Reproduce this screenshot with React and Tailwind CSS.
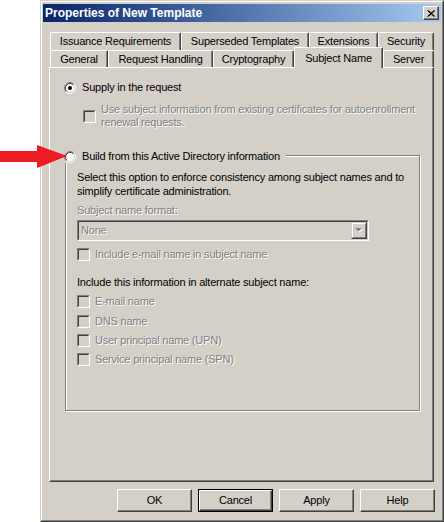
import React from "react";

function Radio({ checked }) {
  return (
    <svg width="12" height="12" viewBox="0 0 12 12" className="shrink-0 block">
      <circle cx="6" cy="6" r="4.5" fill="#ffffff" />
      <path d="M2.11 9.89 A5.5 5.5 0 0 1 9.89 2.11" fill="none" stroke="#808080" strokeWidth="1" />
      <path d="M9.89 2.11 A5.5 5.5 0 0 1 2.11 9.89" fill="none" stroke="#ffffff" strokeWidth="1" />
      <path d="M2.82 9.18 A4.5 4.5 0 0 1 9.18 2.82" fill="none" stroke="#404040" strokeWidth="1" />
      <path d="M9.18 2.82 A4.5 4.5 0 0 1 2.82 9.18" fill="none" stroke="#d4d0c8" strokeWidth="1" />
      {checked && <circle cx="6" cy="6" r="2" fill="#000000" />}
    </svg>
  );
}

function Check() {
  return (
    <div className="w-[13px] h-[13px] shrink-0 border border-t-[#808080] border-l-[#808080] border-b-white border-r-white">
      <div className="w-full h-full border border-t-[#404040] border-l-[#404040] border-b-[#d4d0c8] border-r-[#d4d0c8] bg-[#d4d0c8]" />
    </div>
  );
}

const dis = "text-[#808080] [text-shadow:1px_1px_0_#ffffff]";

function Tab({ w, children, selected }) {
  if (selected) {
    return (
      <div
        className={`${w} relative z-10 -mt-[3px] h-[21px] shrink-0 flex justify-center pt-[3px] leading-[14px] bg-[#d4d0c8] border-l border-t border-r border-l-white border-t-white border-r-[#404040] rounded-t-[2px] shadow-[inset_-1px_0_0_#808080]`}
      >
        {children}
      </div>
    );
  }
  return (
    <div
      className={`${w} h-full shrink-0 flex items-center justify-center leading-[13px] bg-[#d4d0c8] border-l border-t border-r border-l-white border-t-white border-r-[#404040] rounded-t-[2px] shadow-[inset_-1px_0_0_#808080]`}
    >
      {children}
    </div>
  );
}

function Button({ children, def }) {
  if (def) {
    return (
      <div className="w-[75px] h-[23px] border border-black">
        <div className="w-full h-full border border-t-white border-l-white border-b-[#404040] border-r-[#404040] shadow-[inset_-1px_-1px_0_#808080] flex items-center justify-center leading-[13px]">
          {children}
        </div>
      </div>
    );
  }
  return (
    <div className="w-[75px] h-[23px] border border-t-white border-l-white border-b-[#404040] border-r-[#404040] shadow-[inset_-1px_-1px_0_#808080] flex items-center justify-center leading-[13px]">
      {children}
    </div>
  );
}

function CheckRow({ children, className = "" }) {
  return (
    <div className={`flex items-center h-[13px] gap-[5px] ${className}`}>
      <Check />
      <span className={`${dis} leading-[13px] whitespace-nowrap`}>{children}</span>
    </div>
  );
}

export default function App() {
  return (
    <div className="relative w-[444px] h-[522px] bg-white overflow-hidden font-['Liberation_Sans',Arial,sans-serif] text-[11px] tracking-[-0.2px] text-black">
      <div className="ml-[40px] w-[404px] h-[522px] border border-t-[#d4d0c8] border-l-[#d4d0c8] border-b-[#404040] border-r-[#404040]">
        <div className="w-full h-full border border-t-white border-l-white border-b-[#808080] border-r-[#808080] bg-[#d4d0c8] pt-[2px] px-px flex flex-col">
          {/* Title bar */}
          <div className="h-[18px] shrink-0 flex items-center justify-between pl-[2px] pr-[2px] bg-linear-to-r from-[#0a246a] to-[#a6caf0]">
            <span className="text-white font-bold text-[12px] tracking-normal leading-[14px] whitespace-nowrap">
              Properties of New Template
            </span>
            <div className="w-[16px] h-[14px] border border-t-white border-l-white border-b-[#404040] border-r-[#404040] shadow-[inset_-1px_-1px_0_#808080] bg-[#d4d0c8] flex items-center justify-center">
              <svg width="8" height="7" viewBox="0 0 8 7" className="block">
                <path d="M0.5 0.5 L7 6.5 M1.5 0.5 L8 6.5 M7 0.5 L0.5 6.5 M8 0.5 L1.5 6.5" stroke="#000" strokeWidth="1" />
              </svg>
            </div>
          </div>

          {/* Tabs */}
          <div className="mt-[10px] ml-[6px] w-[385px] h-[35px] pl-px flex flex-col shrink-0">
            <div className="flex h-[18px]">
              <Tab w="w-[131px]">Issuance Requirements</Tab>
              <Tab w="w-[128px]">Superseded Templates</Tab>
              <Tab w="w-[69px]">Extensions</Tab>
              <Tab w="w-[56px]">Security</Tab>
            </div>
            <div className="flex h-[17px]">
              <Tab w="w-[58px]">General</Tab>
              <Tab w="w-[105px]">Request Handling</Tab>
              <Tab w="w-[81px]">Cryptography</Tab>
              <Tab w="w-[89px]" selected>Subject Name</Tab>
              <Tab w="w-[51px]">Server</Tab>
            </div>
          </div>

          {/* Panel */}
          <div className="ml-[6px] w-[385px] h-[415px] shrink-0 border border-t-white border-l-white border-b-[#404040] border-r-[#404040] shadow-[inset_-1px_-1px_0_#808080] pl-[14px] pt-[13px] flex flex-col">
            <div className="flex items-center h-[13px] gap-[6px]">
              <Radio checked />
              <span className="leading-[13px] whitespace-nowrap">Supply in the request</span>
            </div>

            <div className="mt-[9px] ml-[19px] flex items-center gap-[5px]">
              <Check />
              <span className={`${dis} leading-[13px] whitespace-nowrap`}>
                Use subject information from existing certificates for autoenrollment
                <br />
                renewal requests.
              </span>
            </div>

            {/* Group box */}
            <div className="relative mt-[26px] ml-px w-[355px] h-[256px] shrink-0 border border-[#808080] shadow-[1px_1px_0_#ffffff,inset_1px_1px_0_#ffffff] pl-[11px] pt-[14px] flex flex-col">
              <div className="absolute left-[-2px] top-[-6px] flex items-center h-[13px] gap-[6px] pr-[6px] bg-[#d4d0c8]">
                <Radio />
                <span className="leading-[13px] whitespace-nowrap">Build from this Active Directory information</span>
              </div>

              <p className="leading-[14px] whitespace-nowrap">
                Select this option to enforce consistency among subject names and to
                <br />
                simplify certificate administration.
              </p>

              <span className={`${dis} mt-[6px] leading-[13px]`}>Subject name format:</span>

              <div className="mt-[3px] w-[292px] h-[21px] shrink-0 border border-t-[#808080] border-l-[#808080] border-b-white border-r-white">
                <div className="w-full h-full border border-t-[#404040] border-l-[#404040] border-b-[#d4d0c8] border-r-[#d4d0c8] bg-[#d4d0c8] flex items-center justify-between pl-[2px]">
                  <span className={`${dis} leading-[13px]`}>None</span>
                  <div className="w-[16px] h-[17px] border border-t-[#d4d0c8] border-l-[#d4d0c8] border-b-[#404040] border-r-[#404040]">
                    <div className="w-full h-full border border-t-white border-l-white border-b-[#808080] border-r-[#808080] flex items-center justify-center">
                      <svg width="8" height="5" viewBox="0 0 8 5" className="block">
                        <path d="M1 1 H8 L4.5 4.5 Z" fill="#ffffff" />
                        <path d="M0 0 H7 L3.5 3.5 Z" fill="#808080" />
                      </svg>
                    </div>
                  </div>
                </div>
              </div>

              <CheckRow className="mt-[7px]">Include e-mail name in subject name</CheckRow>

              <span className="mt-[15px] leading-[13px] whitespace-nowrap">
                Include this information in alternate subject name:
              </span>

              <CheckRow className="mt-[6px]">E-mail name</CheckRow>
              <CheckRow className="mt-[7px]">DNS name</CheckRow>
              <CheckRow className="mt-[6px]">User principal name (UPN)</CheckRow>
              <CheckRow className="mt-[6px]">Service principal name (SPN)</CheckRow>
            </div>
          </div>

          {/* Buttons */}
          <div className="mt-[7px] flex justify-end gap-[6px] pr-[6px]">
            <Button>OK</Button>
            <Button def>Cancel</Button>
            <Button>Apply</Button>
            <Button>Help</Button>
          </div>
        </div>
      </div>

      {/* Red annotation arrow */}
      <svg
        width="68"
        height="26"
        viewBox="0 0 68 26"
        className="absolute left-0 top-[143px] block"
      >
        <polygon points="0,8 37,8 37,2 67,13 37,25 37,19 0,19" fill="#ed1c24" />
      </svg>
    </div>
  );
}
